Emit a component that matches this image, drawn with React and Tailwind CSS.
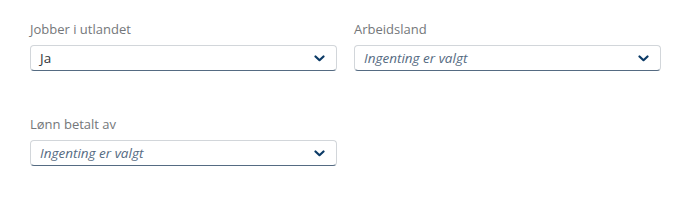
import React from 'react'

const Chevron = () => (
  <svg width="11" height="7" viewBox="0 0 11 7" className="shrink-0">
    <path d="M1.5 1.5 L5.5 5.2 L9.5 1.5" fill="none" stroke="#0b3a66" strokeWidth="2.2" strokeLinecap="round" strokeLinejoin="round" />
  </svg>
)

const Field = ({ label, value, placeholder }) => (
  <div className="flex flex-col">
    <label className="text-[13px] leading-[16px] text-[#74777a] mb-[8px]">{label}</label>
    <div className="h-[26px] flex items-center justify-between pl-[9px] pr-[11px] bg-white border border-[#d2d6da] border-b-[#556b82] rounded-[4px]">
      {value ? (
        <span className="text-[13.5px] text-[#32363a]">{value}</span>
      ) : (
        <span className="text-[13.5px] italic text-[#556b82]">{placeholder}</span>
      )}
      <Chevron />
    </div>
  </div>
)

const App = () => {
  return (
    <div className="w-[695px] h-[210px] bg-white pl-[30px] pt-[21px]" style={{ fontFamily: '"Open Sans", "Liberation Sans", sans-serif' }}>
      <div className="grid grid-cols-[307px_307px] gap-x-[17px] gap-y-[45px]">
        <Field label="Jobber i utlandet" value="Ja" />
        <Field label="Arbeidsland" placeholder="Ingenting er valgt" />
        <Field label="Lønn betalt av" placeholder="Ingenting er valgt" />
      </div>
    </div>
  )
}

export default App
